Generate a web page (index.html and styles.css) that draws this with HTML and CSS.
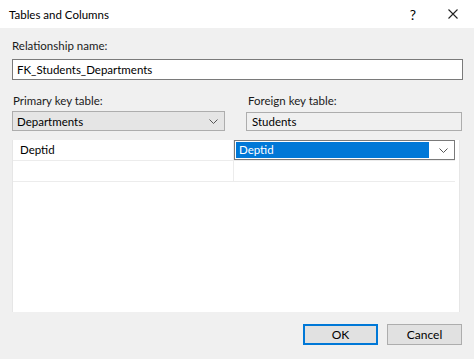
FILE: index.html
```html
<!DOCTYPE html>
<html lang="en">
<head>
  <meta charset="UTF-8">
  <title>Tables and Columns</title>
  <link rel="stylesheet" href="styles.css">
</head>
<body>
  <div class="window">
    <div class="titlebar">
      <span class="title">Tables and Columns</span>
      <span class="help">?</span>
      <svg class="close" width="10" height="10" viewBox="0 0 10 10">
        <path d="M0.5 0.5 L9.5 9.5 M9.5 0.5 L0.5 9.5" stroke="#222" stroke-width="1.1" fill="none"/>
      </svg>
    </div>

    <div class="content">
      <div class="label">Relationship name:</div>
      <div class="textbox">FK_Students_Departments</div>

      <div class="tables">
        <div class="col">
          <div class="label">Primary key table:</div>
          <div class="combo">
            <span>Departments</span>
            <svg class="chevron" width="9" height="5" viewBox="0 0 9 5">
              <path d="M0.5 0.5 L4.5 4.5 L8.5 0.5" stroke="#555" stroke-width="1" fill="none"/>
            </svg>
          </div>
        </div>
        <div class="col right">
          <div class="label">Foreign key table:</div>
          <div class="readonly">Students</div>
        </div>
      </div>

      <div class="grid">
        <div class="row">
          <div class="cell">Deptid</div>
          <div class="cell">
            <div class="cell-combo">
              <span class="selected">Deptid</span>
              <svg class="chevron" width="9" height="5" viewBox="0 0 9 5">
                <path d="M0.5 0.5 L4.5 4.5 L8.5 0.5" stroke="#555" stroke-width="1" fill="none"/>
              </svg>
            </div>
          </div>
        </div>
        <div class="row">
          <div class="cell"></div>
          <div class="cell"></div>
        </div>
      </div>

      <div class="buttons">
        <div class="button default">OK</div>
        <div class="button">Cancel</div>
      </div>
    </div>
  </div>
</body>
</html>
```

FILE: styles.css
```css
html, body {
  margin: 0;
  padding: 0;
}
body {
  font-family: Lato, "Noto Sans", sans-serif;
  font-size: 11.5px;
  color: #000;
  background: #f0f0f0;
}
.window {
  width: 474px;
  height: 359px;
  background: #f0f0f0;
  overflow: hidden;
}
.titlebar {
  height: 28px;
  background: #fff;
  display: flex;
  align-items: center;
  padding: 0 16px 0 9px;
}
.title {
  flex: 1;
}
.help {
  font-size: 14px;
  margin-right: 32px;
}
.close {
  display: block;
}
.content {
  padding: 10px 12px 0 12px;
}
.label {
  line-height: 15px;
  height: 15px;
  color: #1a1a1a;
}
.textbox {
  margin-top: 6px;
  height: 19px;
  border: 1px solid #7a7a7a;
  background: #fff;
  line-height: 19px;
  padding-left: 4px;
  width: 445px;
}
.tables {
  display: flex;
  margin-top: 13px;
  gap: 21px;
}
.col {
  width: 213px;
}
.col.right {
  width: 216px;
}
.col .label {
  padding-left: 1px;
}
.col.right .label {
  padding-left: 2px;
}
.combo {
  margin-top: 3px;
  height: 18px;
  border: 1px solid #adadad;
  background: #e5e5e5;
  display: flex;
  align-items: center;
  justify-content: space-between;
  padding: 0 6px 0 4px;
}
.readonly {
  margin-top: 4px;
  height: 17px;
  line-height: 17px;
  border: 1px solid #adadad;
  background: #f0f0f0;
  padding-left: 5px;
}
.grid {
  margin-top: 9px;
  width: 448px;
  height: 172px;
  background: #fff;
  border-left: 1px solid #e6e6e6;
  border-right: 1px solid #e6e6e6;
  box-sizing: border-box;
}
.row {
  display: flex;
  height: 20px;
  border-bottom: 1px solid #ececec;
  width: 442px;
}
.cell {
  width: 220px;
  line-height: 20px;
  padding-left: 7px;
  box-sizing: border-box;
}
.cell + .cell {
  width: 222px;
  padding-left: 0;
  border-left: 1px solid #ececec;
}
.cell-combo {
  height: 18px;
  border: 1px solid #7a7a7a;
  background: #fff;
  display: flex;
  align-items: center;
  padding: 0 6px 0 1px;
}
.selected {
  flex: 1;
  height: 16px;
  line-height: 16px;
  background: #0078d7;
  color: #fff;
  padding-left: 3px;
  margin-right: 10px;
}
.buttons {
  display: flex;
  justify-content: flex-end;
  gap: 9px;
  margin-top: 12px;
}
.button {
  width: 73px;
  height: 19px;
  line-height: 19px;
  text-align: center;
  background: #e1e1e1;
  border: 1px solid #adadad;
  font-size: 12px;
}
.button.default {
  border: 1px solid #0078d7;
  box-shadow: inset 0 0 0 1px #0078d7;
}
```
